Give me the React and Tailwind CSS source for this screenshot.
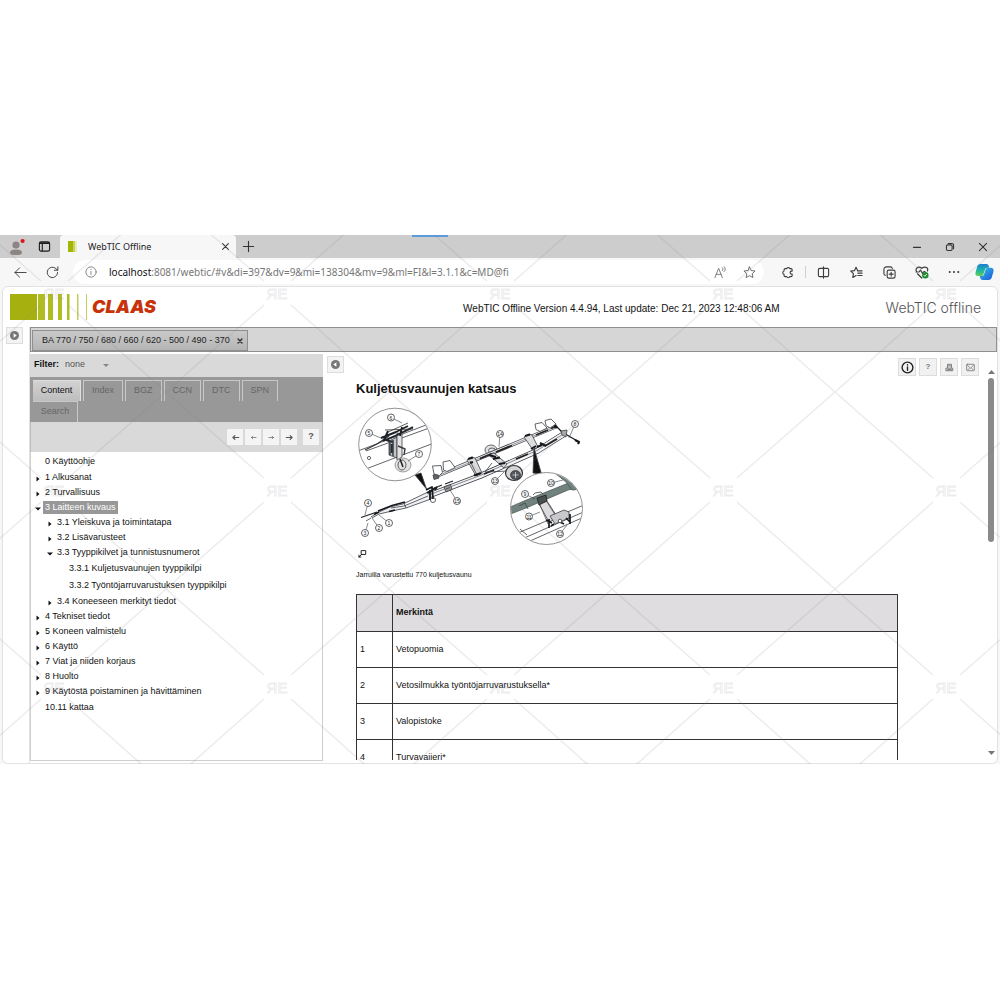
import { useState } from 'react';

const TREE = [
    { label: '0 Käyttöohje', level: 0 },
    { label: '1 Alkusanat', level: 0, state: 'closed' },
    { label: '2 Turvallisuus', level: 0, state: 'closed' },
    { label: '3 Laitteen kuvaus', level: 0, state: 'open' },
    { label: '3.1 Yleiskuva ja toimintatapa', level: 1, state: 'closed' },
    { label: '3.2 Lisävarusteet', level: 1, state: 'closed' },
    { label: '3.3 Tyyppikilvet ja tunnistusnumerot', level: 1, state: 'open' },
    { label: '3.3.1 Kuljetusvaunujen tyyppikilpi', level: 2 },
    { label: '3.3.2 Työntöjarruvarustuksen tyyppikilpi', level: 2 },
    { label: '3.4 Koneeseen merkityt tiedot', level: 1, state: 'closed' },
    { label: '4 Tekniset tiedot', level: 0, state: 'closed' },
    { label: '5 Koneen valmistelu', level: 0, state: 'closed' },
    { label: '6 Käyttö', level: 0, state: 'closed' },
    { label: '7 Viat ja niiden korjaus', level: 0, state: 'closed' },
    { label: '8 Huolto', level: 0, state: 'closed' },
    { label: '9 Käytöstä poistaminen ja hävittäminen', level: 0, state: 'closed' },
    { label: '10.11 kattaa', level: 0 },
];

const INDENT = ['pl-1', 'pl-4', 'pl-7'];
const TABS = ['Index', 'BGZ', 'CCN', 'DTC', 'SPN'];
const PARTS = ['Vetopuomia', 'Vetosilmukka työntöjarruvarustuksella*', 'Valopistoke', 'Turvavaijeri*'];

function Icon({ size = 14, width = 1, className = '', children }) {
    return (
        <svg width={size} height={size} viewBox="0 0 14 14" fill="none" stroke="currentColor" strokeWidth={width}
             strokeLinecap="round" strokeLinejoin="round" className={`shrink-0 ${className}`} aria-hidden="true">
            {children}
        </svg>
    );
}

function TabStrip() {
    return (
        <div className="relative flex h-[23px] shrink-0 items-stretch bg-[#cdcdcd] text-[#333]">
            <div className="absolute left-[412px] top-0 h-0.5 w-9 bg-[#5b9bdc]" />
            <button aria-label="Profile" className="ml-2 flex w-[18px] items-center justify-center">
                <svg width="18" height="18" viewBox="0 0 18 18" aria-hidden="true">
                    <circle cx="8" cy="7" r="3.6" fill="#8b8583" />
                    <path d="M2 14.5c0-2 2-3 6-3s6 1 6 3-2 2.6-6 2.6-6-.6-6-2.6z" fill="#8b8583" />
                    <circle cx="14.6" cy="3" r="2.1" fill="#e0131d" />
                </svg>
            </button>
            <button aria-label="Tab actions" className="ml-2.5 flex w-4 items-center justify-center text-[#1c1c1c]">
                <Icon size={13} width={1.2}>
                    <rect x="1.5" y="2" width="11" height="10" rx="1.8" />
                    <path d="M1.8 3.8h10.4M2 2.9h10M4.6 4v7.8" />
                </Icon>
            </button>
            <div className="ml-2 flex w-[176px] items-center rounded-t-[4px] bg-[#f7f7f7] pl-2">
                <svg width="10" height="11" viewBox="0 0 10 11" aria-hidden="true">
                    <path d="M0 0h5v11H0z" fill="#a5b600" />
                    <path d="M5 0h2v11H5z" fill="#c6d260" />
                    <path d="M7.4 0h1.2v11H7.4z" fill="#dbe39b" />
                </svg>
                <span className="ml-2.5 flex-1 text-[9px] text-[#222]">WebTIC Offline</span>
                <button aria-label="Close tab" className="mr-1.5 text-[#333]">
                    <Icon size={9} width={1.6}><path d="M2.5 2.5l9 9M11.5 2.5l-9 9" /></Icon>
                </button>
            </div>
            <button aria-label="New tab" className="ml-1.5 flex items-center">
                <Icon size={13} width={1.2}><path d="M7 1.5v11M1.5 7h11" /></Icon>
            </button>
            <div className="ml-auto flex items-center gap-[23px] pr-3">
                <button aria-label="Minimize"><Icon size={10} width={1.5}><path d="M2 7.5h10" /></Icon></button>
                <button aria-label="Restore">
                    <Icon size={10} width={1.5}>
                        <rect x="2" y="4" width="8" height="8" rx="1.8" />
                        <path d="M4.5 2h5a2.5 2.5 0 0 1 2.5 2.5v5" />
                    </Icon>
                </button>
                <button aria-label="Close"><Icon size={10} width={1.5}><path d="M2 2l10 10M12 2L2 12" /></Icon></button>
            </div>
        </div>
    );
}

function Toolbar() {
    return (
        <div className="flex h-7 shrink-0 items-center bg-[#f7f7f7] pl-3.5 pr-1.5 text-[#3c3c3c]">
            <button aria-label="Back"><Icon size={13}><path d="M13 7H1M6 2L1 7l5 5" /></Icon></button>
            <button aria-label="Reload" className="ml-[19px]">
                <Icon size={13}><path d="M12.5 7a5.6 5.6 0 1 1-1.8-4.2L12.6 4.4M12.8.8v3.8H9" /></Icon>
            </button>
            <div className="ml-3.5 flex h-6 flex-1 items-center rounded-full bg-white pl-3 pr-2">
                <Icon size={12} className="text-[#777]"><circle cx="7" cy="7" r="6" /><path d="M7 6.3v3.6M7 4v.3" /></Icon>
                <div className="ml-3 flex flex-1 items-center text-[10px]">
                    <label htmlFor="address" className="text-[#111]">localhost</label>
                    <input id="address" readOnly value=":8081/webtic/#v&di=397&dv=9&mi=138304&mv=9&ml=FI&l=3.1.1&c=MD@fi"
                           className="min-w-0 flex-1 bg-transparent text-[#777] outline-none" />
                </div>
                <button aria-label="Read aloud" className="text-[#777]">
                    <Icon size={13}><path d="M1 12.5L5 2.5l4 10M2.4 9h5.2M9 1.8c.9.9.9 2.2 0 3.2M11 .8c1.5 1.5 1.5 3.6 0 5.2" /></Icon>
                </button>
                <button aria-label="Add to favorites" className="ml-4 text-[#666]">
                    <Icon size={13}><path d="M7 1l1.8 3.9 4.2.5-3.1 2.9.8 4.2L7 10.4l-3.7 2.1.8-4.2L1 5.4l4.2-.5z" /></Icon>
                </button>
            </div>
            <button aria-label="Extensions" className="ml-[17px]">
                <Icon size={13} width={1.2}><path d="M4.5 2.8h1.7a1.700 1.700 0 0 1 3.200 0h1.400c.8 0 1.200.4 1.200 1.200v1.500h-.6a1.600 1.600 0 0 0 0 3.200h.6V10.300c0 .8-.4 1.200-1.200 1.200H9.400a1.700 1.700 0 0 1-3.200 0H4.500c-.8 0-1.200-.4-1.200-1.200V8.900a1.800 1.800 0 0 1 0-3.500V4c0-.8.4-1.200 1.200-1.200z" /></Icon>
            </button>
            <span className="ml-[11px] h-3 w-px bg-[#d0d0d0]" />
            <button aria-label="Split screen" className="ml-[11px]">
                <Icon size={13} width={1.2}><path d="M5.6 2.5H3A1.5 1.5 0 0 0 1.5 4v6A1.5 1.5 0 0 0 3 11.500h2.600M8.400 2.500H11A1.500 1.500 0 0 1 12.500 4v6a1.500 1.500 0 0 1-1.500 1.500H8.400M7 1v12M5.600 2.500H7M5.600 11.500H7M7 2.500h1.500M7 11.500h1.500" /></Icon>
            </button>
            <button aria-label="Favorites" className="ml-5">
                <Icon size={13} width={1.2}><path d="M8.300 5L6.500 1.300 4.800 5l-4 .5 2.900 2.800-.7 4 3.600-2M8 5.200h5M8.500 7.700H13M8.500 10.200H13" /></Icon>
            </button>
            <button aria-label="Collections" className="ml-5">
                <Icon size={13} width={1.2}><rect x="4.500" y="4.500" width="8.500" height="8.500" rx="1.800" /><path d="M8.800 6.700v4.200M6.700 8.800h4.200M2.700 10A2 2 0 0 1 1 8V3.500A2.500 2.500 0 0 1 3.500 1H8a2 2 0 0 1 2 1.700" /></Icon>
            </button>
            <button aria-label="Browser essentials" className="ml-[19px]">
                <Icon size={14} width={1.2}>
                    <path d="M1.500 6.500C0 3.500 3 .5 6.800 3.300 10.500.5 13.700 3.200 12.400 6M1 7h3l1.500-2 2 3.500L9 6.500h1M2.500 8.800L6.800 13" />
                    <circle cx="10.300" cy="10.200" r="3.200" fill="#1b8a2c" stroke="none" />
                    <path d="M8.900 10.300l1 1 1.700-2" stroke="#fff" strokeWidth="0.900" />
                </Icon>
            </button>
            <button aria-label="More" className="ml-[19px]">
                <Icon size={12}><g fill="currentColor" stroke="none"><circle cx="2" cy="7" r="1.200" /><circle cx="7" cy="7" r="1.200" /><circle cx="12" cy="7" r="1.200" /></g></Icon>
            </button>
            <button aria-label="Copilot" className="ml-[15px]">
                <svg width="19" height="18" viewBox="0 0 19 18" aria-hidden="true">
                    <defs>
                        <linearGradient id="cpA" x1="0" y1="0" x2="0" y2="1">
                            <stop offset="0" stopColor="#1a7fd0" /><stop offset=".5" stopColor="#1bb3a8" /><stop offset="1" stopColor="#63cf52" />
                        </linearGradient>
                        <linearGradient id="cpB" x1="0" y1="0" x2="1" y2="1">
                            <stop offset="0" stopColor="#34c4e8" /><stop offset="1" stopColor="#1c55d8" />
                        </linearGradient>
                    </defs>
                    <path d="M5.500 1h6c1.500 0 2 1 2.400 2.400l.4 1.300h-2c-1.500 0-2 .8-2.400 2L8.600 11c-.5 1.500-1.300 2-2.800 2H3.200C.8 13 0 11.300.6 9.200l1.600-5.500C2.800 2 3.800 1 5.500 1z" fill="url(#cpA)" />
                    <path d="M13.500 17h-6c-1.500 0-2-1-2.400-2.400L4.700 13h2c1.500 0 2-.6 2.400-1.800L10.400 7c.5-1.500 1.300-2.300 2.800-2.300h2.600c2.400 0 3.200 2 2.600 4.100l-1.600 5.500C16.200 16 15.200 17 13.500 17z" fill="url(#cpB)" />
                </svg>
            </button>
        </div>
    );
}

function Header() {
    return (
        <header className="flex h-10 shrink-0 items-center pl-[7px] pr-4">
            <svg width="78" height="26" viewBox="0 0 78 26" className="shrink-0" aria-hidden="true">
                <path d="M0 0h27v26H0z" fill="#a6b110" />
                <path d="M28 0h7v26h-7zM38 0h5v26h-5zM48 0h4v26h-4zM57 0h2.500v26H57z" fill="#b0bd22" />
                <path d="M67 0h1.500v26H67zM76 0h1v26h-1z" fill="#c3ce5a" />
            </svg>
            <span className="ml-1 font-[Inter,sans-serif] text-[18px] font-black italic leading-4 text-[#c8320a]">CLAAS</span>
            <p className="ml-auto pt-0.5 text-[10px] text-[#111]">WebTIC Offline Version 4.4.94, Last update: Dec 21, 2023 12:48:06 AM</p>
            <p className="ml-[106px] font-[Inter,sans-serif] text-[14px] font-light text-[#555]">WebTIC offline</p>
        </header>
    );
}

function GutterButton({ label, path }) {
    return (
        <button aria-label={label} className="flex size-[17px] items-center justify-center border border-[#ddd] bg-[#f3f3f3]">
            <svg width="9" height="9" viewBox="0 0 10 10" aria-hidden="true">
                <circle cx="5" cy="5" r="5" fill="#777" />
                <path d={path} fill="#fff" />
            </svg>
        </button>
    );
}

function Arrow({ state }) {
    if (!state) return null;
    return (
        <svg width="6" height="6" viewBox="0 0 6 6" aria-hidden="true">
            <path d={state === 'open' ? 'M0 1.500h6L3 4.500z' : 'M1.500 0.500L4.500 3 1.500 5.500z'} fill="#111" />
        </svg>
    );
}

function Tree() {
    const [selected, setSelected] = useState('3 Laitteen kuvaus');
    return (
        <ul className="flex-1 overflow-hidden border-x border-b border-[#cfcfcf] bg-white pt-px">
            {TREE.map((n) => (
                <li key={n.label} className={`flex items-center ${n.state ? 'h-[15px]' : 'h-[17px]'} ${INDENT[n.level]}`}>
                    <span className="flex w-2 justify-start pt-0.5"><Arrow state={n.state} /></span>
                    <button onClick={() => setSelected(n.label)}
                            className={`h-[13px] whitespace-nowrap px-0.5 text-[9px] leading-[13px] ${selected === n.label ? 'bg-[#989898] text-white' : 'text-[#111]'}`}>
                        {n.label}
                    </button>
                </li>
            ))}
        </ul>
    );
}

const NAV = [
    { label: 'First', d: 'M12 7H3M6 4L3 7l3 3', w: 1.8 },
    { label: 'Previous', d: 'M11 7H4M6 5L4 7l2 2', w: 1 },
    { label: 'Next', d: 'M3 7h7M8 5l2 2-2 2', w: 1 },
    { label: 'Last', d: 'M2 7h9M8 4l3 3-3 3', w: 1.8 },
];

function Sidebar() {
    return (
        <aside className="flex w-[293px] shrink-0 flex-col">
            <div className="flex h-[23px] shrink-0 items-center bg-[#d9d9d9] pb-0.5 pl-1">
                <label htmlFor="filter" className="text-[9px] font-bold text-[#111]">Filter:</label>
                <div className="relative ml-1.5 flex w-12 items-center">
                    <select id="filter" className="w-full appearance-none bg-transparent text-[9px] text-[#555] outline-none">
                        <option>none</option>
                    </select>
                    <svg width="6" height="4" viewBox="0 0 6 4" className="pointer-events-none absolute right-1 top-1.5" aria-hidden="true">
                        <path d="M0 0h6L3 3z" fill="#888" />
                    </svg>
                </div>
            </div>
            <div className="flex shrink-0 flex-wrap gap-x-0.5 bg-[#989898] pl-[3px] pt-[3px] text-[9px] text-[#666]">
                <button className="h-[21px] w-12 border-r border-t border-[#ddd] bg-gradient-to-b from-[#d2d2d2] to-[#bdbdbd] text-[#111]">Content</button>
                {TABS.map((t) => (
                    <button key={t} className="h-[21px] border-x border-t border-x-[#c8c8c8] border-t-[#c8c8c8] px-2">{t}</button>
                ))}
                <button className="h-[21px] w-[45px] border-r border-t border-[#c8c8c8]">Search</button>
            </div>
            <div className="flex h-[30px] shrink-0 items-center justify-end gap-0.5 border-x border-[#bbb] bg-[#d9d9d9] pr-[3px] text-[#555]">
                {NAV.map((b) => (
                    <button key={b.label} aria-label={b.label} className="flex size-4 items-center justify-center bg-[#f4f4f4]">
                        <Icon size={9} width={b.w}><path d={b.d} /></Icon>
                    </button>
                ))}
                <button aria-label="Help" className="ml-1 size-4 bg-[#f4f4f4] text-[9px] font-bold">?</button>
            </div>
            <Tree />
        </aside>
    );
}

const CALLOUTS = [
    [4, 368, 503, 365, 515], [3, 365, 533, 368, 523], [2, 379, 528, 372, 518], [1, 389, 523, 379, 515],
    [5, 369, 433, 381, 438], [6, 391, 417.5, 402, 423], [7, 419, 454, 408, 461], [15, 457, 501, 450, 490],
    [14, 500, 434, 499, 447], [13, 495, 481, 504, 472], [8, 575, 424, 569, 438], [9, 525, 494, 535, 499],
    [10, 551, 483, 563, 480], [11, 529, 516.5, 540, 512], [12, 560, 534, 567, 525],
];

// Transport trailer: two long beams, axle with wheels, and two detail lenses
function TrailerDrawing() {
    return (
        <svg viewBox="356 405 228 142" className="block w-[228px]" fill="none" stroke="#3a3d44" strokeWidth=".8" strokeLinejoin="round"
             role="img" aria-label="Kuljetusvaunu">
            <defs>
                <clipPath id="lensA"><circle cx="395" cy="444.5" r="36" /></clipPath>
                <clipPath id="lensB"><circle cx="546.5" cy="508.5" r="35.5" /></clipPath>
            </defs>

            {/* drawbar */}
            <path d="M361 517.5l16-5.500" strokeWidth="1.200" stroke="#222" />
            <path d="M371 517l6-4 13-6 13-3 25-12 3 7-25 9-14 3-13 3-7 4M391 508l13-2 24-10M404 503l2 5" fill="#f0f0f2" />
            <path d="M374 514.500l5-2.500M389 511.500l6-1.500M378 511l14-5.500 13-3.500" stroke="#15181d" strokeWidth="1.500" />
            <path d="M366 521l5-3" />

            {/* rear wheel sits behind the beams */}
            <ellipse cx="491" cy="450" rx="6" ry="5" fill="#e2e2e4" stroke="#444" />
            <ellipse cx="492" cy="450.500" rx="3.500" ry="2.500" />

            {/* rear beam */}
            <path d="M434 477l123-51" stroke="#3a3d44" strokeWidth="4" />
            <path d="M434 477l123-51" stroke="#f4f4f6" strokeWidth="2.500" />
            <path d="M436 476.500l120-50" strokeWidth=".5" />
            <path d="M433 475l4-1 2 4-5 1.500z" fill="#666" />
            <path d="M434 474l-1.500-8 8.500-.500 1.500 7-3 3zM443.500 470l-.5-8 7-1.500 5 7-8 4z" fill="#fff" />
            <path d="M536 429.500l-1-5.500 7-1.500 5 5.500-7 3.500zM546 425.500l-1-5 6-1.500 5 5-6 4z" fill="#fff" />
            <path d="M480 458.500l12-5M496 452l16-6.500M536 435l12-5M551 428.500l6-2.500" stroke="#222" strokeWidth="1.800" />

            {/* front beam */}
            <path d="M430 495l50-19 57-25 27-17" stroke="#3a3d44" strokeWidth="6" />
            <path d="M430 495l50-19 57-25 27-17" stroke="#f4f4f6" strokeWidth="4.500" />
            <path d="M430 494.500l50-19 57-25 27-17" strokeWidth=".6" />
            <path d="M484 474l10-4M516 459l12-5M545 446l12-7" stroke="#222" strokeWidth="1.800" />

            {/* cross members */}
            <path d="M467 460l4-3 4 1 7 15-6 3zM470 461l7 14" fill="#ddd" />
            <path d="M468 459l5-1.500M474 475.500l7-2.500M470 463l3-1" stroke="#15181d" strokeWidth="2.200" />
            <path d="M524 437l5-3 3 1 6 12-5 3z" fill="#ddd" />
            <path d="M525 436l5-1.500M531 449l5-3M537 447l5-2M540 443l6 3" stroke="#15181d" strokeWidth="2" />
            <path d="M444 487l2 5 6-2.500-1.500-5zM446 489l4-1.500" fill="#999" />
            <path d="M426 490l6-3 1 12M427 493l10-6M430 490v10M435 490l2-3" stroke="#15181d" strokeWidth="1.800" />
            <path d="M432 489l10-4M445 484l8-3" stroke="#222" strokeWidth="1.200" />
            <circle cx="433" cy="500" r="2.500" />

            {/* axle and front wheel */}
            <path d="M485 472l24-1M485 472l7-9" />
            <path d="M489 455l5-2 13 11-3 4z" fill="#d8d8da" />
            <path d="M489 455l7 2M493 459l7-1.500M499 464l6-1" stroke="#15181d" strokeWidth="2" />
            <ellipse cx="514" cy="473" rx="8.500" ry="7.500" fill="#d5d5d5" stroke="#333" strokeWidth="1.200" />
            <ellipse cx="515.500" cy="475" rx="5" ry="4.500" fill="#50545b" />
            <path d="M512.500 475h6M515.500 472v6" stroke="#ddd" />

            {/* rear coupling */}
            <path d="M555 425l7 7 17 10" stroke="#15181d" strokeWidth="1.200" />
            <path d="M554 426l3 1.500M575 440l4 2-1 2" stroke="#15181d" strokeWidth="2.200" />
            <path d="M561 431l6-1-1 7-4-2z" fill="#aaa" />

            {/* pointers */}
            <path d="M415 475l6-2 5.500 16z" fill="#111" />
            <path d="M534 448l-1 25 8.500 1z" fill="#111" />

            {/* left lens */}
            <circle cx="395" cy="444.500" r="36.300" fill="#fff" stroke="#777" />
            <g clipPath="url(#lensA)">
                <path d="M358 451l76-29M358 472l76-29M366 451l66-24" />
                <path d="M365 450l12-6 12-8" stroke="#333" strokeWidth="1.300" />
                <circle cx="369" cy="458" r="1.600" />
                <path d="M389 441v14l8 3V437z" fill="#c4c5c9" />
                <path d="M397 433l5 1v23l-5 3z" fill="#e4e4e6" />
                <path d="M381 438l15-6 12-6M383 441l14-6 16-8M388 431l-4 9M392 444v9M402 427l-2 9M386 440l7 2" stroke="#1d2329" strokeWidth="1.900" />
                <path d="M388 432l20-9M394 437l19-9M385 430l28-1" stroke="#333" />
                <path d="M390 440v15M393 440v16M398 446l7 3-1 6" strokeWidth="1.500" />
                <ellipse cx="403" cy="465" rx="8" ry="7" fill="#e3e3e3" stroke="#888" />
                <ellipse cx="402" cy="465" rx="4" ry="5" />
                <path d="M400 459l3 8" stroke="#222" strokeWidth="1.500" />
            </g>

            {/* right lens */}
            <circle cx="546.500" cy="508.500" r="36" fill="#fff" stroke="#777" />
            <g clipPath="url(#lensB)">
                <path d="M518 533l66-28M522 539l66-29M530 541l54-24M520 529l7 6" />
                <path d="M508 508l16-7 42-17 20-5v7l-18 4-42 18-18 7z" fill="#71827e" stroke="#4c5a57" />
                <path d="M556 474l10 8 6 8 12-1-8-15-12-4z" fill="#71827e" stroke="#4c5a57" />
                <path d="M519 506l6-3 3 6" stroke="#3b4745" />
                <path d="M539 504l8-3 11 17-9 4z" fill="#dcdcde" />
                <path d="M540 505l8 19M547 502l10 16" stroke="#555" />
                <path d="M537 498l9-3 1 6-8 4z" fill="#48514f" stroke="#222" />
                <path d="M533 495l2-2 6-1 2 2" />
                <path d="M550 516l14-6 5 2v6l-14 6z" fill="#c9c9cb" />
                <path d="M549 519v9M546 520l6 3M551 526l3-2M560 522l4 2M566 518l4 4M570 514v10" stroke="#15181d" strokeWidth="1.700" />
                <circle cx="560" cy="521" r="1.800" fill="#fff" />
            </g>

            {CALLOUTS.map(([n, x, y, tx, ty]) => (
                <g key={n}>
                    <path d={`M${x} ${y}L${tx} ${ty}`} strokeWidth=".6" />
                    <circle cx={x} cy={y} r="3.5" fill="#fff" strokeWidth=".8" />
                    <text x={x} y={y + 2} textAnchor="middle" fontSize="5" fill="#222" stroke="none">{n}</text>
                </g>
            ))}
        </svg>
    );
}

function Article() {
    return (
        <article className="mb-px min-w-0 flex-1 overflow-hidden text-[#111]">
            <h1 className="mt-[27px] text-[13px] font-bold leading-4">Kuljetusvaunujen katsaus</h1>
            <figure className="mt-2">
                <TrailerDrawing />
                <button aria-label="Zoom" className="mt-0.5 block pl-0.5">
                    <Icon size={9} width={1.4}><path d="M5.500 2.500h6.500v6H5.500zM5.500 8.500L1.500 12.500M1.500 9.500v3h3" /></Icon>
                </button>
                <figcaption className="mt-3 text-[7px] leading-[10px]">Jarruilla varustettu 770 kuljetusvaunu</figcaption>
            </figure>
            <table className="mt-3.5 w-full border-collapse text-left text-[9px]">
                <thead>
                    <tr className="h-[37px] bg-[#dfdde0]">
                        <th className="w-9 border border-[#333]" aria-label="Nro" />
                        <th className="border border-[#333] px-[3px]">Merkintä</th>
                    </tr>
                </thead>
                <tbody>
                    {PARTS.map((name, i) => (
                        <tr key={name} className="h-9">
                            <td className="border border-[#333] px-[3px]">{i + 1}</td>
                            <td className="border border-[#333] px-[3px]">{name}</td>
                        </tr>
                    ))}
                </tbody>
            </table>
        </article>
    );
}

function PageTools() {
    const box = 'flex size-[18px] items-center justify-center border border-[#ddd] bg-[#f1f1f1] text-[#777]';
    return (
        <div className="flex shrink-0 gap-[3px] pt-1">
            <button aria-label="Info" className={box}>
                <Icon size={13} width={1.5} className="text-[#222]"><circle cx="7" cy="7" r="5.800" /><path d="M7 6.500V10M7 4v.3" /></Icon>
            </button>
            <button aria-label="Help" className={`${box} text-[8px] font-bold`}>?</button>
            <button aria-label="Print" className={box}>
                <Icon size={9} width={1.5}><path d="M4 7V2h6v5M2 8h10v4H2zM5 4.500h4M4 10h6" /></Icon>
            </button>
            <button aria-label="Mail" className={box}>
                <Icon size={9} width={1.3}><rect x="1" y="2" width="12" height="10" rx="1" /><path d="M2.500 4L7 8l4.500-4M3 10.500l2-2M11 10.500l-2-2" /></Icon>
            </button>
        </div>
    );
}

function Scrollbar() {
    return (
        <div className="ml-2 mr-0.5 flex w-2 shrink-0 flex-col items-center pb-1.5 pt-4" aria-hidden="true">
            <svg width="7" height="4" viewBox="0 0 7 4"><path d="M3.500 0L7 4H0z" fill="#777" /></svg>
            <div className="mt-1 flex w-full flex-1">
                <div className="ml-px h-[44%] w-1.5 rounded-full bg-[#8a8a8c]" />
            </div>
            <svg width="7" height="4" viewBox="0 0 7 4"><path d="M3.500 4L7 0H0z" fill="#777" /></svg>
        </div>
    );
}

function Overlay() {
    return (
        <svg className="pointer-events-none absolute inset-0 size-full" aria-hidden="true">
            <defs>
                <pattern id="mesh" x="-57" y="-40" width="223" height="197" patternUnits="userSpaceOnUse">
                    <g stroke="#807888" strokeOpacity=".15" strokeWidth="1.5">
                        <path d="M0 0L98 86M125 86L223 0M0 197L98 110M125 110L223 197" />
                    </g>
                    <text x="111" y="104" textAnchor="middle" fontSize="15" fill="none" stroke="#807888" strokeOpacity=".15">ЯE</text>
                </pattern>
            </defs>
            <rect width="100%" height="100%" fill="url(#mesh)" />
        </svg>
    );
}

export default function App() {
    return (
        <div className="flex h-screen flex-col bg-white pb-[236px] pt-[235px] font-['Liberation_Sans',Arial,sans-serif]">
            <div className="relative flex min-h-0 flex-1 flex-col overflow-hidden bg-[#f7f7f7]">
                <div className="shrink-0 font-['Noto_Sans',sans-serif]">
                    <TabStrip />
                    <Toolbar />
                </div>
                <div className="ml-0.5 mr-0.5 flex min-h-0 flex-1 flex-col rounded-md border border-[#e2e2e2] bg-white">
                    <Header />
                    <div className="flex min-h-0 flex-1">
                        <div className="w-[27px] shrink-0 border-r border-[#e2e2e2] pl-[3px]">
                            <GutterButton label="Expand" path="M4 2.500L7.500 5 4 7.500z" />
                        </div>
                        <div className="flex min-w-0 flex-1 flex-col">
                            <div className="flex h-[25px] shrink-0 border border-[#8f8f8f] bg-[#d7d6d7] pl-px pt-0.5">
                                <div className="flex w-[216px] items-center border border-[#8f8f8f] bg-gradient-to-b from-[#c9c9c9] to-[#b5b5b5] pl-[9px]">
                                    <span className="flex-1 whitespace-nowrap text-[9px] text-[#222]">BA 770 / 750 / 680 / 660 / 620 - 500 / 490 - 370</span>
                                    <button aria-label="Close document" className="mr-1 text-[#333]">
                                        <Icon size={6} width={3.5}><path d="M2.500 2.500l9 9M11.500 2.500l-9 9" /></Icon>
                                    </button>
                                </div>
                            </div>
                            <div className="mt-0.5 flex min-h-0 flex-1 pb-0.5">
                                <Sidebar />
                                <div className="ml-1 mr-3 pt-0.5">
                                    <GutterButton label="Collapse" path="M6 2.500L2.500 5 6 7.500z" />
                                </div>
                                <Article />
                                <PageTools />
                                <Scrollbar />
                            </div>
                        </div>
                    </div>
                </div>
                <Overlay />
            </div>
        </div>
    );
}
